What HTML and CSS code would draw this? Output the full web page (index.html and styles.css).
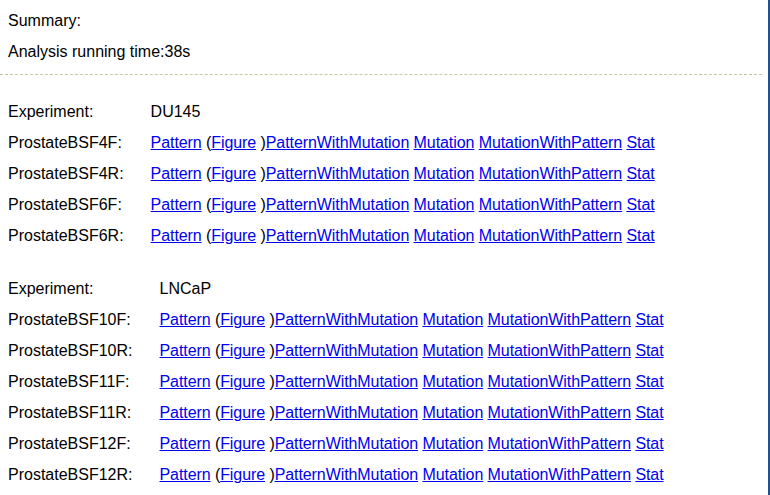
FILE: index.html
```html
<!DOCTYPE html>
<html>
<head>
<meta charset="utf-8">
<title>Summary</title>
<link rel="stylesheet" href="styles.css">
</head>
<body>
<div class="page">
  <div class="summary">
    <div class="line">Summary:</div>
    <div class="line">Analysis running time:38s</div>
  </div>
  <div class="rule"></div>
  <table class="exp">
    <tr><td class="label">Experiment:</td><td>DU145</td></tr>
    <tr><td class="label">ProstateBSF4F:</td><td class="links"><a href="#">Pattern</a> (<a href="#">Figure</a> )<a href="#">PatternWithMutation</a> <a href="#">Mutation</a> <a href="#">MutationWithPattern</a> <a href="#">Stat</a></td></tr>
    <tr><td class="label">ProstateBSF4R:</td><td class="links"><a href="#">Pattern</a> (<a href="#">Figure</a> )<a href="#">PatternWithMutation</a> <a href="#">Mutation</a> <a href="#">MutationWithPattern</a> <a href="#">Stat</a></td></tr>
    <tr><td class="label">ProstateBSF6F:</td><td class="links"><a href="#">Pattern</a> (<a href="#">Figure</a> )<a href="#">PatternWithMutation</a> <a href="#">Mutation</a> <a href="#">MutationWithPattern</a> <a href="#">Stat</a></td></tr>
    <tr><td class="label">ProstateBSF6R:</td><td class="links"><a href="#">Pattern</a> (<a href="#">Figure</a> )<a href="#">PatternWithMutation</a> <a href="#">Mutation</a> <a href="#">MutationWithPattern</a> <a href="#">Stat</a></td></tr>
  </table>
  <table class="exp exp-second">
    <tr><td class="label">Experiment:</td><td>LNCaP</td></tr>
    <tr><td class="label">ProstateBSF10F:</td><td class="links"><a href="#">Pattern</a> (<a href="#">Figure</a> )<a href="#">PatternWithMutation</a> <a href="#">Mutation</a> <a href="#">MutationWithPattern</a> <a href="#">Stat</a></td></tr>
    <tr><td class="label">ProstateBSF10R:</td><td class="links"><a href="#">Pattern</a> (<a href="#">Figure</a> )<a href="#">PatternWithMutation</a> <a href="#">Mutation</a> <a href="#">MutationWithPattern</a> <a href="#">Stat</a></td></tr>
    <tr><td class="label">ProstateBSF11F:</td><td class="links"><a href="#">Pattern</a> (<a href="#">Figure</a> )<a href="#">PatternWithMutation</a> <a href="#">Mutation</a> <a href="#">MutationWithPattern</a> <a href="#">Stat</a></td></tr>
    <tr><td class="label">ProstateBSF11R:</td><td class="links"><a href="#">Pattern</a> (<a href="#">Figure</a> )<a href="#">PatternWithMutation</a> <a href="#">Mutation</a> <a href="#">MutationWithPattern</a> <a href="#">Stat</a></td></tr>
    <tr><td class="label">ProstateBSF12F:</td><td class="links"><a href="#">Pattern</a> (<a href="#">Figure</a> )<a href="#">PatternWithMutation</a> <a href="#">Mutation</a> <a href="#">MutationWithPattern</a> <a href="#">Stat</a></td></tr>
    <tr><td class="label">ProstateBSF12R:</td><td class="links"><a href="#">Pattern</a> (<a href="#">Figure</a> )<a href="#">PatternWithMutation</a> <a href="#">Mutation</a> <a href="#">MutationWithPattern</a> <a href="#">Stat</a></td></tr>
  </table>
</div>
</body>
</html>
```
FILE: styles.css
```css
html, body {
  margin: 0;
  padding: 0;
  background: #ffffff;
}
body {
  font-family: "Liberation Sans", Arial, sans-serif;
  font-size: 16px;
  color: #000000;
  overflow: hidden;
}
.page {
  box-sizing: border-box;
  width: 770px;
  min-height: 495px;
  border-right: 2px solid #24508f;
  padding-top: 5px;
}
.summary {
  padding-left: 8px;
}
.line {
  line-height: 31px;
  white-space: nowrap;
}
.rule {
  width: 762px;
  border-top: 1px dashed #c9c8a2;
  margin-top: 7px;
}
.exp {
  border-collapse: collapse;
  border-spacing: 0;
  margin-top: 21px;
  margin-left: 8px;
}
.exp-second {
  margin-top: 22px;
}
.exp td {
  padding: 0;
  line-height: 31px;
  white-space: nowrap;
  vertical-align: top;
}
.exp td.label {
  padding-right: 27px;
}
.exp td.links {
  letter-spacing: -0.08px;
}
a {
  color: #0000ee;
  text-decoration: underline;
}
```
